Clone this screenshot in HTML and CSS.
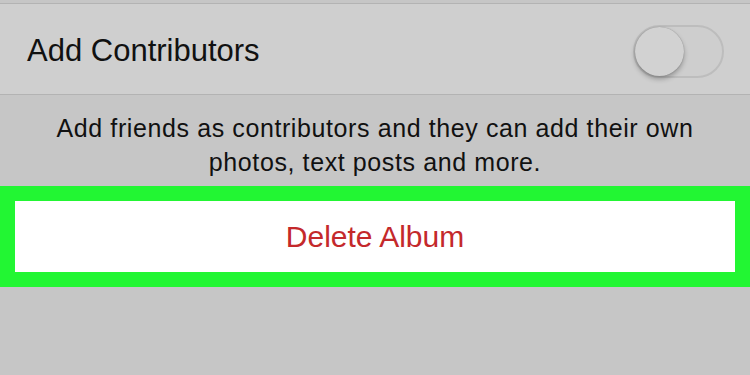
FILE: index.html
```html
<!DOCTYPE html>
<html lang="en">
<head>
    <meta charset="UTF-8">
    <meta name="viewport" content="width=device-width, initial-scale=1.0">
    <title>Album Settings</title>
    <link rel="stylesheet" href="styles.css">
</head>
<body>
    <div class="settings-group">
        <div class="setting-row">
            <span class="setting-label">Add Contributors</span>
            <div class="toggle">
                <div class="toggle-knob"></div>
            </div>
        </div>
    </div>

    <p class="setting-note">Add friends as contributors and they can add their own photos, text posts and more.</p>

    <div class="highlight">
        <button class="delete-btn">Delete Album</button>
    </div>
</body>
</html>
```

FILE: styles.css
```css
body {
    margin: 0;
    font-family: 'Liberation Sans', Arial, sans-serif;
    background: #c6c6c6;
    width: 750px;
    height: 375px;
    overflow: hidden;
}

.settings-group {
    margin-top: 3px;
    background: #cfcfcf;
    border-top: 1px solid #b3b3b3;
    border-bottom: 1px solid #b3b3b3;
}

.setting-row {
    display: flex;
    align-items: center;
    justify-content: space-between;
    height: 90px;
    padding: 0 26px 0 27px;
}

.setting-label {
    font-size: 31px;
    color: #111;
    margin-top: 4px;
}

.toggle {
    width: 87px;
    height: 49px;
    border: 2px solid #bdbdbd;
    border-radius: 27px;
    background: #cecece;
    position: relative;
    margin-top: 4px;
}

.toggle-knob {
    position: absolute;
    left: 0;
    top: 0;
    width: 49px;
    height: 49px;
    border-radius: 50%;
    background: #d2d2d2;
    box-shadow: 0 3px 5px rgba(0, 0, 0, 0.28), 0 0 1px rgba(0, 0, 0, 0.35);
}

.setting-note {
    margin: 0;
    padding: 16px 30px 0;
    height: 75px;
    text-align: center;
    font-size: 25px;
    letter-spacing: 0.6px;
    line-height: 34px;
    color: #111;
}

.highlight {
    background: #22f633;
    padding: 15px;
}

.delete-btn {
    display: block;
    width: 100%;
    height: 71px;
    border: none;
    background: #fff;
    color: #c4292b;
    font-family: 'Liberation Sans', Arial, sans-serif;
    font-size: 30px;
    padding: 0;
}
```
